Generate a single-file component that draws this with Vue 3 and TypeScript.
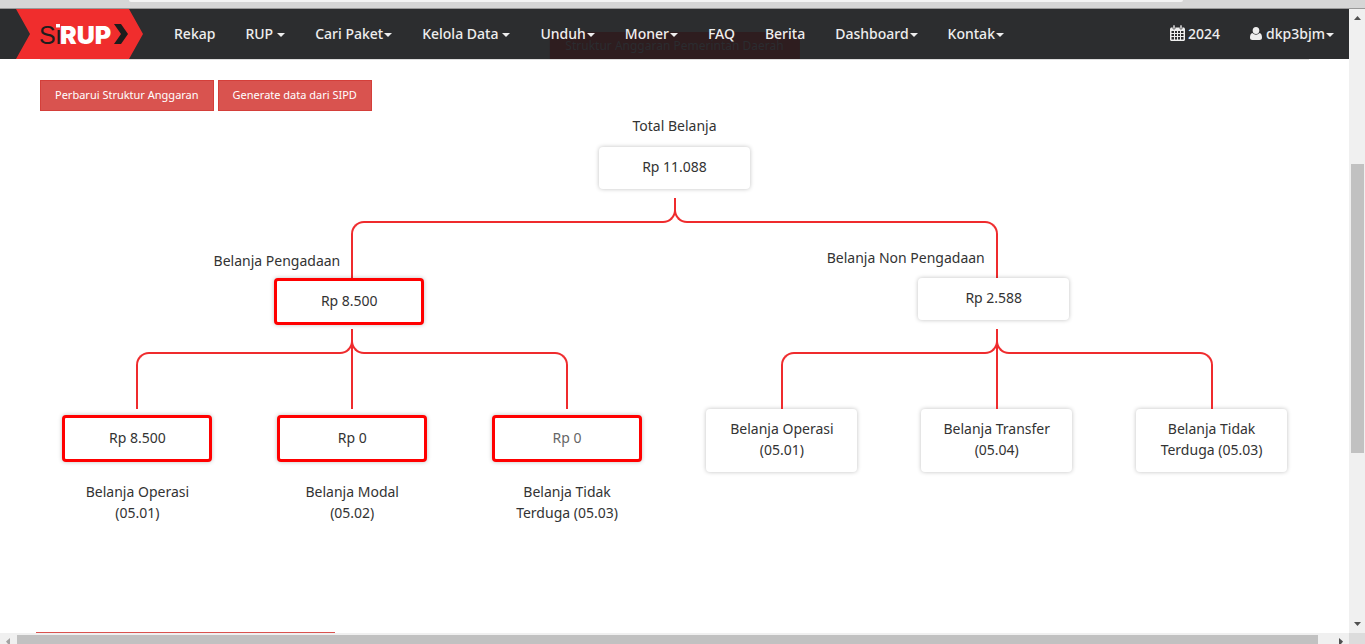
<script setup lang="ts">
interface NavItem { label: string; caret?: boolean; spaced?: boolean }
interface Leaf { label: string; value?: string; muted?: boolean }
interface Branch { label: string; value: string; outlined: boolean; children: Leaf[] }

const menu: NavItem[] = [
  { label: 'Rekap' },
  { label: 'RUP', caret: true, spaced: true },
  { label: 'Cari Paket', caret: true },
  { label: 'Kelola Data', caret: true, spaced: true },
  { label: 'Unduh', caret: true },
  { label: 'Moner', caret: true },
  { label: 'FAQ' },
  { label: 'Berita' },
  { label: 'Dashboard', caret: true },
  { label: 'Kontak', caret: true },
]

const branches: Branch[] = [
  {
    label: 'Belanja Pengadaan', value: 'Rp 8.500', outlined: true,
    children: [
      { label: 'Belanja Operasi (05.01)', value: 'Rp 8.500' },
      { label: 'Belanja Modal (05.02)', value: 'Rp 0' },
      { label: 'Belanja Tidak Terduga (05.03)', value: 'Rp 0', muted: true },
    ],
  },
  {
    label: 'Belanja Non Pengadaan', value: 'Rp 2.588', outlined: false,
    children: [
      { label: 'Belanja Operasi (05.01)' },
      { label: 'Belanja Transfer (05.04)' },
      { label: 'Belanja Tidak Terduga (05.03)' },
    ],
  },
]
</script>

<template>
  <div class="window">
    <div class="chrome"><div class="address"></div></div>
    <div class="view">
      <div class="page">
        <header class="navbar">
          <h2 class="ghost">Struktur Anggaran Pemerintah Daerah</h2>
          <a class="brand" href="#" aria-label="SiRUP">
            <svg width="127" height="50" viewBox="0 0 127 50">
              <path d="M0 0H113L127 25L113 50H0L14 25Z" fill="#f02d2d" />
              <text x="23" y="35" class="logo-si">Si</text>
              <path d="M40 15H44V18.500H40Z" fill="#fff" />
              <text x="44" y="35" class="logo-rup">RUP</text>
              <path d="M98 15H105L112 25L105 35H98L105 25Z" fill="#1d1d1d" />
            </svg>
          </a>
          <nav class="menu">
            <a v-for="m in menu" :key="m.label" href="#">{{ m.label }}<i v-if="m.caret" class="caret" :class="{ spaced: m.spaced }"></i></a>
          </nav>
          <nav class="menu account">
            <a href="#">
              <svg class="icon" width="15" height="16" viewBox="0 0 15 16">
                <path d="M1 2.500H14L15 3.500V15L14 16H1L0 15V3.500Z" fill="#eee" />
                <path d="M3 0H5V4H3ZM10 0H12V4H10Z" fill="#eee" stroke="#2c2d2f" stroke-width=".6" />
                <path d="M1.500 6H4V8H1.500ZM5 6H7V8H5ZM8 6H10V8H8ZM11 6H13.500V8H11ZM1.500 9H4V11H1.500ZM5 9H7V11H5ZM8 9H10V11H8ZM11 9H13.500V11H11ZM1.500 12H4V14.500H1.500ZM5 12H7V14.500H5ZM8 12H10V14.500H8ZM11 12H13.500V14.500H11Z" fill="#2c2d2f" />
              </svg>2024</a>
            <a href="#">
              <svg class="icon person" width="12" height="13" viewBox="0 0 12 13">
                <ellipse cx="6" cy="3.500" rx="3.300" ry="3.500" fill="#eee" />
                <path d="M2.500 6C.7 6.500 0 8.300 0 10.500C0 12.300 1 13 2.500 13H9.500C11 13 12 12.300 12 10.500C12 8.300 11.300 6.500 9.500 6C7.500 8.300 4.500 8.300 2.500 6Z" fill="#eee" />
              </svg>dkp3bjm<i class="caret"></i></a>
          </nav>
        </header>

        <main class="content">
          <div class="actions">
            <button type="button">Perbarui Struktur Anggaran</button>
            <button type="button">Generate data dari SIPD</button>
          </div>

          <section class="tree">
            <div class="root-label">Total Belanja</div>
            <div class="node">Rp 11.088</div>
            <div class="links pair"><i></i><i></i><i></i><i></i></div>
            <div class="branches">
              <div v-for="b in branches" :key="b.label" class="branch" :class="{ outlined: b.outlined }">
                <div class="branch-label">{{ b.label }}</div>
                <div class="node">{{ b.value }}</div>
                <div class="links triple"><i></i><i></i><i></i><i></i></div>
                <div class="leaves">
                  <div v-for="c in b.children" :key="c.label" class="leaf">
                    <template v-if="c.value">
                      <div class="node" :class="{ muted: c.muted }">{{ c.value }}</div>
                      <div class="caption">{{ c.label }}</div>
                    </template>
                    <div v-else class="node">{{ c.label }}</div>
                  </div>
                </div>
              </div>
            </div>
          </section>
          <div class="next-section"></div>
        </main>
      </div>

      <div class="vbar">
        <svg width="16" height="18" viewBox="0 0 16 18"><path d="M5 11H12L8.500 7Z" fill="#505050" /></svg>
        <div class="vtrack"><div class="vthumb"></div></div>
        <svg width="16" height="18" viewBox="0 0 16 18"><path d="M5 7H12L8.500 11Z" fill="#505050" /></svg>
      </div>
      <div class="hbar">
        <svg width="17" height="11" viewBox="0 0 17 11"><path d="M10 5V11H8L6 8.500Z" fill="#a3a3a3" /></svg>
        <div class="hthumb"></div>
        <svg width="17" height="11" viewBox="0 0 17 11"><path d="M7 5L11 8.500L9 11H7Z" fill="#505050" /></svg>
      </div>
      <div class="corner"></div>
    </div>
  </div>
</template>

<style>
body { margin: 0; }
</style>

<style scoped>
.window {
  display: flex;
  flex-direction: column;
  height: 100vh;
  overflow: hidden;
  background: #fff;
  color: #333;
  font: 14px/21px "Noto Sans", "Open Sans", sans-serif;
}
.window * { box-sizing: border-box; }
.chrome {
  flex: none;
  height: 9px;
  padding: 0 182px 0 129px;
  background: #d6d6d6;
  border-bottom: 1px solid #999;
}
.address { height: 2px; background: #f4f4f4; border-radius: 0 0 6px 6px; }
.view {
  flex: 1;
  min-height: 0;
  display: grid;
  grid-template: minmax(0, 1fr) 11px / minmax(0, 1fr) 16px;
}
.page { overflow: hidden; }
.navbar {
  position: relative;
  display: flex;
  height: 50px;
  padding-left: 16px;
  background: #2c2d2f;
}
.ghost {
  position: absolute;
  left: 50%;
  bottom: 0;
  height: 27px;
  margin: 0;
  padding: 0 16px;
  transform: translateX(-50%);
  background: #2e1d1f;
  color: #2b2c30;
  font-size: 12px;
  line-height: 27px;
  font-weight: 400;
  white-space: nowrap;
}
.brand { flex: none; position: relative; height: 50px; }
.logo-si { font: 25px "Liberation Sans", Arial, sans-serif; fill: #1d1d1d; }
.logo-rup { font: 900 25px Inter, sans-serif; fill: #fff; }
.menu { position: relative; display: flex; margin-left: 16px; white-space: nowrap; }
.menu a {
  display: flex;
  align-items: center;
  padding: 0 15px 2px;
  color: #eee;
  font-size: 14px;
  font-weight: 500;
  text-decoration: none;
}
.account { margin-left: auto; }
.caret {
  margin: 4px 0 0 1px;
  border: 4px solid transparent;
  border-top-color: #eee;
  border-bottom: 0;
}
.caret.spaced { margin-left: 4px; }
.icon { margin-right: 3px; }
.icon.person { margin-right: 4px; }

.content { margin: 0 40px; border-top: 1px solid #ddd; }
.actions { display: flex; gap: 4px; padding-top: 20px; }
.actions button {
  height: 31px;
  padding: 0 14px 2px;
  border: 1px solid #d43f3a;
  border-radius: 0;
  background: #d9534f;
  color: #fff;
  font: 11px/18px "Noto Sans", "Open Sans", sans-serif;
}
.tree { margin: 4px -10px 0; text-align: center; }
.root-label { margin-bottom: 11px; }
.node {
  width: 151px;
  margin: 0 auto;
  padding: 9px 20px 12px;
  border-radius: 4px;
  background: #fff;
  box-shadow: 0 0 4px rgba(0, 0, 0, .25);
}
.links { position: relative; display: flex; margin-top: 9px; height: 80px; }
.links.pair { padding: 0 25%; }
.links.triple { padding: 0 calc(100% / 6); }
.links i { flex: 1; height: 25px; border: 0 solid #ef2b2d; }
.links i:nth-child(1) { height: 57px; margin: 23px 0 0 -1px; border-width: 2px 0 0 2px; border-top-left-radius: 13px; }
.links i:nth-child(2) { margin-right: -1px; border-width: 0 2px 2px 0; border-bottom-right-radius: 13px; }
.links i:nth-child(3) { margin-left: -1px; border-width: 0 0 2px 2px; border-bottom-left-radius: 13px; }
.links i:nth-child(4) { height: 57px; margin: 23px -1px 0 0; border-width: 2px 2px 0 0; border-top-right-radius: 13px; }
.links.triple::after {
  content: "";
  position: absolute;
  left: calc(50% - 1px);
  top: 0;
  width: 2px;
  height: 100%;
  background: #ef2b2d;
}
.branches { display: grid; grid-template-columns: 1fr 1fr; }
.branch { position: relative; }
.branch-label {
  position: absolute;
  right: calc(50% + 12px);
  bottom: 100%;
  margin-bottom: 10px;
  white-space: nowrap;
}
.branch > .node { position: relative; right: 3px; }
.outlined .branch-label { margin-bottom: 7px; }
.outlined .node {
  width: 150px;
  padding: 9px 20px 11px;
  border: 3px solid #f00;
}
.outlined > .links { margin-top: 4px; }
.leaves { display: grid; grid-template-columns: repeat(3, 1fr); }
.outlined .leaves { padding-top: 6px; }
.caption { width: 112px; margin: 19px auto 0; }
.muted { color: #666; }
.next-section {
  width: 299px;
  height: 40px;
  margin: 109px 0 0 -4px;
  background: #d9534f;
}

.vbar { display: flex; flex-direction: column; background: #f0f0f0; }
.vbar svg, .hbar svg { flex: none; display: block; }
.vtrack { flex: 1; display: grid; grid-template-rows: 233fr 492fr 275fr; }
.vthumb { grid-row: 2; margin: 0 1px 0 2px; background: #c1c1c1; }
.hbar { display: flex; background: #f0f0f0; }
.hthumb { flex: 1; margin: 2px 14px 0 0; background: #c1c1c1; }
.corner { background: #dcdcdc; }
</style>
